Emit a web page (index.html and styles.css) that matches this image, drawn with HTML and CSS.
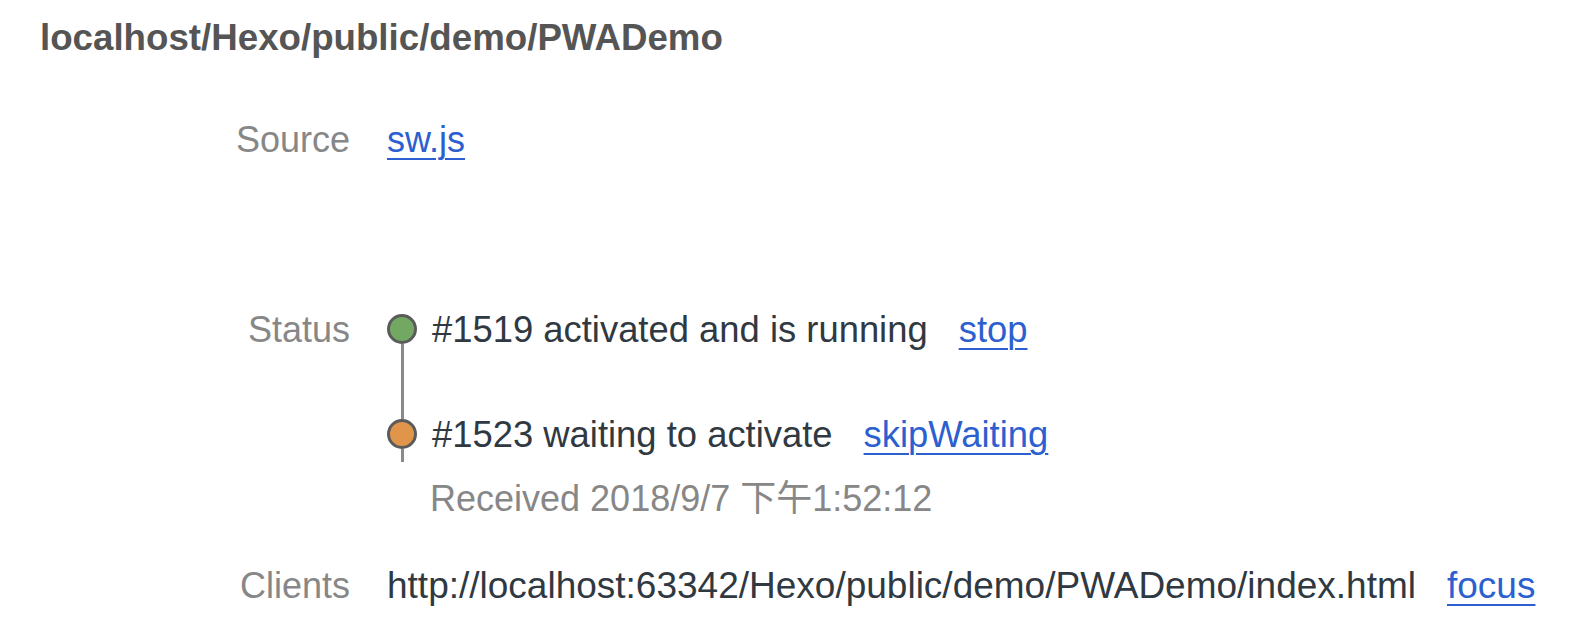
FILE: index.html
```html
<!DOCTYPE html>
<html>
<head>
<meta charset="utf-8">
<link rel="stylesheet" href="styles.css">
</head>
<body>
<div class="panel">
  <div class="title">localhost/Hexo/public/demo/PWADemo</div>
  <div class="info">
    <div class="label row-source">Source</div>
    <div class="value row-source"><a class="link">sw.js</a></div>

    <div class="label row-status">Status</div>
    <div class="value row-status">
      <div class="version v1">
        <div class="rail"><span class="dot green"></span><span class="stem grow"></span></div>
        <div class="vbody"><div class="vline"><span>#1519 activated and is running</span><a class="link">stop</a></div></div>
      </div>
      <div class="version v2">
        <div class="rail"><span class="stem top"></span><span class="dot orange"></span><span class="stem tail"></span></div>
        <div class="vbody">
          <div class="vline"><span>#1523 waiting to activate</span><a class="link">skipWaiting</a></div>
          <div class="received">Received 2018/9/7 下午1:52:12</div>
        </div>
      </div>
    </div>

    <div class="label row-clients">Clients</div>
    <div class="value row-clients clients-value"><span>http://localhost:63342/Hexo/public/demo/PWADemo/index.html</span><a class="link">focus</a></div>
  </div>
</div>
</body>
</html>
```
FILE: styles.css
```css
html, body {
  margin: 0;
  padding: 0;
  background: #ffffff;
}
body {
  font-family: "Liberation Sans", Arial, "Noto Sans CJK SC", sans-serif;
  font-size: 36px;
  line-height: 42px;
  color: #303942;
}
.panel {
  padding: 17px 0 0 40px;
}
.title {
  font-weight: bold;
  font-size: 36.7px;
  color: #555555;
  white-space: nowrap;
}
.info {
  display: grid;
  grid-template-columns: 310px 1fr;
  column-gap: 37px;
  margin-top: 60px;
}
.label {
  text-align: right;
  color: #878787;
  white-space: nowrap;
}
.value {
  white-space: nowrap;
}
.row-status {
  margin-top: 148px;
}
.row-clients {
  margin-top: 45px;
}
.clients-value {
  font-size: 37px;
}
.link {
  color: #2c5fcf;
  text-decoration: underline;
  text-decoration-thickness: 2px;
  text-underline-offset: 6px;
  cursor: pointer;
}
.vline .link,
.row-clients .link {
  margin-left: 31px;
}
.vline {
  font-size: 36.4px;
}
.version {
  display: flex;
  align-items: stretch;
}
.v1 {
  height: 105px;
}
.rail {
  width: 30px;
  display: flex;
  flex-direction: column;
  align-items: center;
  flex: none;
}
.v2 .rail {
  align-self: flex-start;
}
.dot {
  display: block;
  width: 30px;
  height: 30px;
  border-radius: 50%;
  border: 3px solid #5b5b5b;
  box-sizing: border-box;
  flex: none;
}
.v1 .dot {
  margin-top: 5px;
}
.green {
  background: #72a862;
}
.orange {
  background: #e0954b;
}
.stem {
  display: block;
  width: 3px;
  background: #8a8a8a;
}
.stem.grow {
  flex: 1;
}
.stem.top {
  height: 5px;
}
.stem.tail {
  height: 13px;
}
.vbody {
  padding-left: 15px;
}
.received {
  color: #878787;
  margin-top: 22px;
  margin-left: -2px;
}
```
